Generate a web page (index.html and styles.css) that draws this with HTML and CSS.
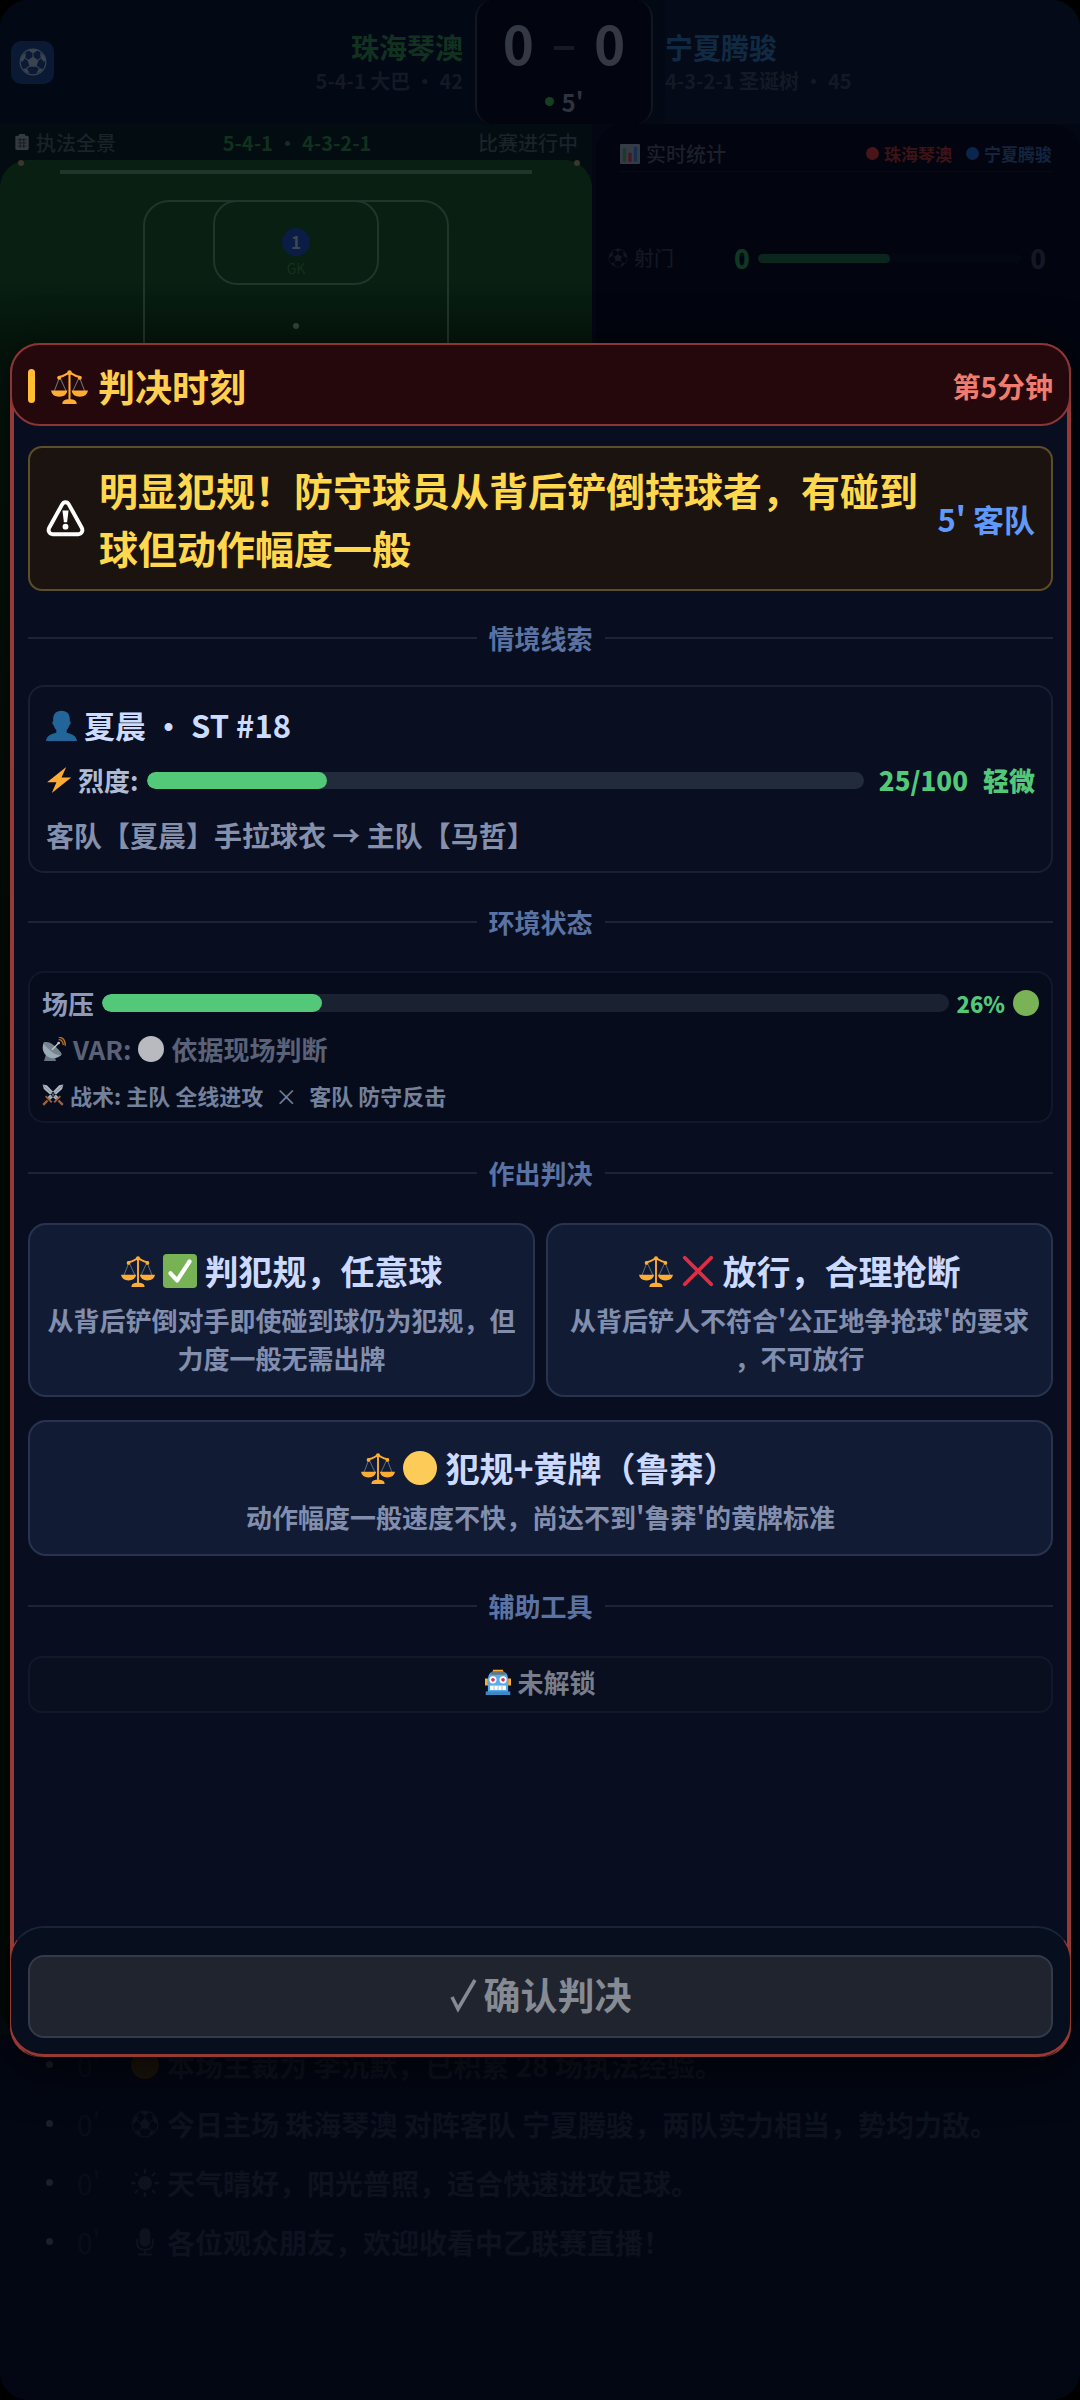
FILE: index.html
```html
<!DOCTYPE html>
<html lang="zh-CN">
<head>
<meta charset="utf-8">
<meta name="viewport" content="width=device-width, initial-scale=1">
<title>判决时刻</title>
<link rel="stylesheet" href="styles.css">
</head>
<body>
<svg class="sprite" aria-hidden="true">
  <symbol id="scales" viewBox="0 0 36 36">
    <path d="M8 10 3 23M9 10l6 13M28 10l5 13M27 10l-6 13" stroke="#66757f" fill="none"/>
    <path d="M7 9q5-1 8-3 3-2 6 0 3 2 8 3" stroke="#ffac33" stroke-width="2" fill="none"/>
    <path d="M17 5h2v26h-2z" fill="#ffac33"/>
    <circle cx="18" cy="4.500" r="2.200" fill="#ffac33"/><circle cx="8" cy="9.500" r="2" fill="#ffac33"/><circle cx="28" cy="9.500" r="2" fill="#ffac33"/>
    <path d="M0 22h16q-1 6-8 6t-8-6zM20 22h16q-1 6-8 6t-8-6zM11 35q0-4 5-4.500h4q5 .5 5 4.500z" fill="#ffac33"/>
  </symbol>
  <symbol id="check" viewBox="0 0 36 36"><rect width="36" height="36" rx="4" fill="#77b255"/><path d="M8 20.500l7 7.500L28 8" fill="none" stroke="#fff" stroke-width="4.500" stroke-linecap="round" stroke-linejoin="round"/></symbol>
  <symbol id="cross" viewBox="0 0 36 36"><path d="M4 4l28 28M32 4 4 32" stroke="#dd2e44" stroke-width="4" stroke-linecap="round"/></symbol>
  <symbol id="disc" viewBox="0 0 36 36"><circle cx="18" cy="18" r="18" fill="currentColor"/></symbol>
  <symbol id="person" viewBox="0 0 36 36"><path d="M24 26.500v-3c1.500-1.600 2.600-3.700 3.200-6 .7-.3 1.400-1 1.400-2.400 0-1.200-.3-2-1-2.500C28.300 5 24.500 1 18 1S7.700 5 8.400 12.600c-.7.500-1 1.300-1 2.500 0 1.400.7 2.100 1.400 2.400.6 2.300 1.700 4.400 3.200 6v3C6 28 1 29.500 0 36h36c-1-6.500-6-8-12-9.500z" fill="#226699"/></symbol>
  <symbol id="bolt" viewBox="0 0 36 36"><path d="M28 0 1.500 21h13L8 36l27-21.500H21.500z" fill="#ffac33"/></symbol>
  <symbol id="dish" viewBox="0 0 36 36">
    <path d="M6 26h12l3 10H3z" fill="#66757f"/>
    <path d="M3 8c-5 9 0 20 9 23 7 2 13 0 17-4z" fill="#99aab5"/><path d="M3 8c4-2 12 1 18 7s10 10 8 12c-4 2-12-2-17-7S1 11 3 8z" fill="#75838d"/>
    <path d="M15 19l10-10" stroke="#c0c7cc" stroke-width="2"/><circle cx="25" cy="9" r="2" fill="#c0c7cc"/>
    <path d="M25 4q6 0 7 8M25 0q10 1 10 13" fill="none" stroke="#b87020" stroke-width="2"/>
  </symbol>
  <symbol id="swords" viewBox="0 0 36 36">
    <path d="M1 1l7 1 20 21-4 4L3 8zM35 1l-7 1L8 23l4 4L33 8z" fill="#aab5bd"/><path d="M2 2l24 23M34 2 10 25" stroke="#7a8994" stroke-width="1.500"/>
    <path d="M20 30l10-10M16 30 6 20" stroke="#a3603a" stroke-width="3"/><path d="M27 27l7 7M9 27l-7 7" stroke="#a3603a" stroke-width="4"/>
  </symbol>
  <symbol id="warning" viewBox="0 0 36 36"><path d="M18 3c1.600 0 2.500 1 3.200 2.200L33 26.500c1.500 3-.2 6-3.200 6H6.200c-3 0-4.700-3-3.200-6L14.800 5.200C15.500 4 16.400 3 18 3z" fill="none" stroke="#fff" stroke-width="3.600"/><path d="M15.200 10.500h5.600l-1.300 11h-3z" fill="#fff"/><circle cx="18" cy="25.500" r="2.700" fill="#fff"/></symbol>
  <symbol id="robot" viewBox="0 0 36 36">
    <path d="M11 1h14v5H11zM0 13h4v10H0zM32 13h4v10h-4z" fill="#ffac33"/><path d="M8 5h20q4 3 4 11v16H4V16Q4 8 8 5z" fill="#55acee"/><path d="M10 3h16l3 5H7z" fill="#66757f"/><path d="M1 31h34v5H1z" fill="#3b88c3"/>
    <circle cx="11" cy="15" r="5" fill="#fff"/><circle cx="25" cy="15" r="5" fill="#fff"/><circle cx="11" cy="15" r="2.500" fill="#dd2e44"/><circle cx="25" cy="15" r="2.500" fill="#dd2e44"/>
    <path d="M7 23h22v6H7z" fill="#fff"/><path d="M12.500 23v6M18 23v6M23.500 23v6" stroke="#99aab5"/>
  </symbol>
  <symbol id="tick" viewBox="0 0 28 36"><path d="M2 20l6 12L25 3" fill="none" stroke="currentColor" stroke-width="3.500"/></symbol>
  <symbol id="ball" viewBox="0 0 36 36"><circle cx="18" cy="18" r="16.500" fill="none" stroke="currentColor" stroke-width="1.500"/><path d="M18 11l7 5-2.700 8h-8.600L11 16zM12 3l6 4 6-4-6-1.500zM1.500 15 5 9l4-3-1 7-4 5zM34.500 15 31 9l-4-3 1 7 4 5zM5 27l5-1 4 7-5-2zM31 27l-5-1-4 7 5-2z" fill="currentColor"/><path d="M18 7v5M8 13l4 3M28 13l-4 3M10 26l4-3M26 26l-4-3" stroke="currentColor" stroke-width="1.500"/></symbol>
  <symbol id="chart" viewBox="0 0 36 36"><rect width="36" height="36" rx="2" fill="#353b49"/><path d="M5 8h6v24H5z" fill="#1c3a24"/><path d="M15 16h6v16h-6z" fill="#4a1620"/><path d="M25 5h6v27h-6z" fill="#16304c"/></symbol>
  <symbol id="clipboard" viewBox="0 0 36 36"><rect x="3" y="4" width="30" height="32" rx="3" fill="currentColor"/><path d="M11 0h14v7H11z" fill="currentColor"/><path d="M8 13h20M8 20h20M8 27h20M14 9v23M22 9v23" stroke="#0b1417" stroke-width="1.500"/></symbol>
  <symbol id="sun" viewBox="0 0 36 36"><circle cx="18" cy="18" r="9" fill="currentColor"/><path d="M18 0v6M18 30v6M0 18h6M30 18h6M5 5l4 4M27 27l4 4M31 5l-4 4M9 27l-4 4" stroke="currentColor" stroke-width="3"/></symbol>
  <symbol id="mic" viewBox="0 0 36 36"><rect x="11" y="0" width="14" height="24" rx="7" fill="currentColor"/><path d="M8 14v6q0 8 10 8t10-8v-6M18 28v5M9 34h18" fill="none" stroke="currentColor" stroke-width="2.500"/></symbol>
</svg>

<div class="page">
  <header class="match">
    <div class="match-side match-home">
      <span class="logo"><svg class="icon icon-28"><use href="#ball"/></svg></span>
      <div class="team">
        <div class="team-name">珠海琴澳</div>
        <div class="team-plan">5-4-1 大巴 • 42</div>
      </div>
    </div>
    <div class="score">
      <div class="score-line"><span>0</span><i></i><span>0</span></div>
      <div class="clock"><i></i>5'</div>
    </div>
    <div class="match-side match-away">
      <div class="team">
        <div class="team-name">宁夏腾骏</div>
        <div class="team-plan">4-3-2-1 圣诞树 • 45</div>
      </div>
    </div>
  </header>

  <div class="board">
    <section class="field">
      <div class="field-head">
        <span class="with-icon"><svg class="icon icon-16"><use href="#clipboard"/></svg>执法全景</span>
        <b>5-4-1 • 4-3-2-1</b>
        <span>比赛进行中</span>
      </div>
      <div class="grass">
        <i class="flag flag-left"></i><i class="flag flag-right"></i>
        <div class="goal-line"></div>
        <div class="penalty-box">
          <div class="goal-box"><span class="keeper">1</span><span class="role">GK</span></div>
          <i class="spot"></i>
        </div>
      </div>
    </section>
    <section class="stats">
      <div class="stats-head">
        <span class="with-icon"><svg class="icon icon-20"><use href="#chart"/></svg>实时统计</span>
        <span class="legend"><span class="legend-home"><i></i>珠海琴澳</span><span class="legend-away"><i></i>宁夏腾骏</span></span>
      </div>
      <div class="stat-row">
        <span class="stat-name with-icon"><svg class="icon icon-20"><use href="#ball"/></svg>射门</span>
        <b class="stat-home">0</b>
        <span class="stat-bar"><i style="width:50%"></i></span>
        <b class="stat-away">0</b>
      </div>
    </section>
  </div>

  <ul class="log">
    <li><span>0'</span><svg class="icon icon-28 amber"><use href="#disc"/></svg>本场主裁为 李沉默，已积累 28 场执法经验。</li>
    <li><span>0'</span><svg class="icon icon-28"><use href="#ball"/></svg>今日主场 珠海琴澳 对阵客队 宁夏腾骏，两队实力相当，势均力敌。</li>
    <li><span>0'</span><svg class="icon icon-28"><use href="#sun"/></svg>天气晴好，阳光普照，适合快速进攻足球。</li>
    <li><span>0'</span><svg class="icon icon-28"><use href="#mic"/></svg>各位观众朋友，欢迎收看中乙联赛直播！</li>
  </ul>
</div>

<div class="overlay">
  <main class="modal" role="dialog" aria-labelledby="modal-title">
    <header class="modal-head">
      <h1 id="modal-title"><svg class="icon icon-37"><use href="#scales"/></svg>判决时刻</h1>
      <span class="minute">第5分钟</span>
    </header>

    <div class="modal-body">
      <div class="alert">
        <svg class="icon icon-39"><use href="#warning"/></svg>
        <p>明显犯规！防守球员从背后铲倒持球者，有碰到球但动作幅度一般</p>
        <span class="alert-side">5' 客队</span>
      </div>

      <h2 class="divider">情境线索</h2>
      <section class="card clue">
        <div class="player"><svg class="icon icon-31"><use href="#person"/></svg>夏晨 • ST #18</div>
        <div class="meter-row">
          <span class="with-icon"><svg class="icon icon-26"><use href="#bolt"/></svg>烈度:</span>
          <span class="meter"><i style="width:25%"></i></span>
          <b class="value">25/100</b><b class="value">轻微</b>
        </div>
        <div class="action">客队【夏晨】手拉球衣 → 主队【马哲】</div>
      </section>

      <h2 class="divider divider-mid">环境状态</h2>
      <section class="card env">
        <div class="meter-row">
          <span>场压</span>
          <span class="meter"><i style="width:26%"></i></span>
          <b class="percent">26%</b>
          <svg class="icon icon-26 green"><use href="#disc"/></svg>
        </div>
        <div class="var"><svg class="icon icon-24"><use href="#dish"/></svg>VAR:<svg class="icon icon-26 white"><use href="#disc"/></svg>依据现场判断</div>
        <div class="tactics"><svg class="icon icon-22"><use href="#swords"/></svg>战术: 主队 全线进攻<span class="versus">×</span>客队 防守反击</div>
      </section>

      <h2 class="divider divider-wide">作出判决</h2>
      <div class="choices">
        <button type="button" class="choice">
          <span class="choice-title"><svg class="icon icon-34"><use href="#scales"/></svg><svg class="icon icon-34"><use href="#check"/></svg>判犯规，任意球</span>
          <span class="choice-note">从背后铲倒对手即使碰到球仍为犯规，但力度一般无需出牌</span>
        </button>
        <button type="button" class="choice">
          <span class="choice-title"><svg class="icon icon-34"><use href="#scales"/></svg><svg class="icon icon-34"><use href="#cross"/></svg>放行，合理抢断</span>
          <span class="choice-note">从背后铲人不符合'公正地争抢球'的要求，不可放行</span>
        </button>
        <button type="button" class="choice choice-full">
          <span class="choice-title"><svg class="icon icon-34"><use href="#scales"/></svg><svg class="icon icon-34 yellow"><use href="#disc"/></svg><span class="hanging-bracket">犯规+黄牌（鲁莽）</span></span>
          <span class="choice-note">动作幅度一般速度不快，尚达不到'鲁莽'的黄牌标准</span>
        </button>
      </div>

      <h2 class="divider divider-wide">辅助工具</h2>
      <button type="button" class="tool" disabled><svg class="icon icon-26"><use href="#robot"/></svg>未解锁</button>
    </div>

    <footer class="modal-foot">
      <button type="button" class="confirm" disabled><svg class="icon icon-tick"><use href="#tick"/></svg>确认判决</button>
    </footer>
  </main>
</div>
</body>
</html>
```
FILE: styles.css
```css
* { box-sizing: border-box; }

body {
  margin: 0;
  background: #000;
  color: #858fab;
  font-family: "Noto Sans CJK SC", "Noto Sans", sans-serif;
  font-weight: 700;
}

h1, h2, p, ul { margin: 0; padding: 0; }
button { font: inherit; color: inherit; }

.sprite { position: absolute; width: 0; height: 0; }
.icon { flex: none; width: 26px; height: 26px; }
.icon-16 { width: 16px; height: 18px; }
.icon-20 { width: 20px; height: 20px; }
.icon-22 { width: 22px; height: 22px; }
.icon-24 { width: 24px; height: 24px; }
.icon-28 { width: 28px; height: 28px; }
.icon-31 { width: 31px; height: 31px; }
.icon-34 { width: 34px; height: 34px; }
.icon-37 { width: 37px; height: 37px; }
.icon-39 { width: 39px; height: 39px; }
.icon-tick { width: 28px; height: 36px; }
.with-icon { display: flex; align-items: center; gap: 6px; }
.green { color: #7ab356; }
.white { color: #b9bac0; }
.yellow { color: #fdcb58; }

/* Match page behind the dialog */
.page {
  display: flex;
  flex-direction: column;
  min-height: 100vh;
  border-radius: 28px;
  overflow: hidden;
  background: #030714;
}

.match {
  display: grid;
  grid-template-columns: 463fr 178px 415fr;
  gap: 12px;
  height: 124px;
  background: #030815;
}
.match-side { display: flex; align-items: center; }
.match-home { justify-content: space-between; padding-left: 11px; text-align: right; }
.match-away { background: #040a17; }
.team-name { font-size: 28px; line-height: 38px; color: #113220; }
.match-away .team-name { color: #112a44; }
.team-plan { font-size: 20px; line-height: 30px; color: #141925; }
.logo {
  display: grid;
  place-items: center;
  width: 43px;
  height: 43px;
  border-radius: 10px;
  background: #0a1a35;
  color: #3c4350;
}
.score {
  border: 2px solid #12161e;
  border-width: 0 2px;
  border-radius: 18px;
  background: #02040f;
  text-align: center;
}
.score-line {
  display: flex;
  justify-content: center;
  align-items: center;
  gap: 20px;
  height: 84px;
  color: #343844;
  font-size: 53px;
}
.score-line i { width: 20px; height: 4px; margin-top: 12px; background: #161a25; }
.clock {
  display: flex;
  justify-content: center;
  align-items: center;
  gap: 8px;
  height: 34px;
  color: #2e333f;
  font-size: 24px;
}
.clock i { width: 9px; height: 9px; border-radius: 50%; background: #14401f; }

.board {
  display: grid;
  grid-template-columns: 592fr 484fr;
  gap: 4px;
  flex: 1;
}
.field { display: flex; flex-direction: column; background: #030c10; }
.field-head {
  display: flex;
  justify-content: space-between;
  align-items: center;
  height: 36px;
  padding: 0 14px;
  font-size: 20px;
  font-weight: 500;
  color: #1a222a;
}
.field-head svg { color: #353a40; }
.field-head b { color: #10311d; }
.grass {
  position: relative;
  flex: 1;
  padding: 10px 60px;
  border-radius: 28px;
  background: linear-gradient(#081f12 0, #081f12 120px, #05150c 190px, #020a08 900px);
}
.flag {
  position: absolute;
  top: 0;
  width: 6px;
  height: 6px;
  border-radius: 50%;
  background: #39382a;
}
.flag-left { left: 18px; }
.flag-right { right: 12px; }
.goal-line { height: 4px; background: #22352b; }
.penalty-box {
  display: flex;
  flex-direction: column;
  align-items: center;
  width: 65%;
  height: 270px;
  margin: 26px auto 0;
  border: 2px solid #22352b;
  border-radius: 26px;
}
.goal-box {
  display: flex;
  flex-direction: column;
  align-items: center;
  gap: 2px;
  width: 55%;
  height: 85px;
  margin-top: -2px;
  padding-top: 26px;
  border: 2px solid #22352b;
  border-radius: 24px;
}
.keeper {
  width: 28px;
  border-radius: 50%;
  background: #0b1d45;
  color: #3e4658;
  font-size: 17px;
  line-height: 28px;
  text-align: center;
}
.role { color: #17301f; font-size: 14px; line-height: 20px; font-weight: 400; }
.spot { width: 6px; height: 6px; margin-top: 38px; border-radius: 50%; background: #34463b; }

.stats { padding: 12px 28px 12px 24px; border-radius: 28px; background: #02040f; }
.stats-head {
  display: flex;
  justify-content: space-between;
  align-items: center;
  height: 36px;
  border-bottom: 1px solid #070b17;
  color: #1b202c;
  font-size: 20px;
  font-weight: 500;
}
.legend { display: flex; gap: 14px; font-size: 17px; font-weight: 700; }
.legend span { display: flex; align-items: center; gap: 5px; }
.legend i { width: 13px; height: 13px; border-radius: 50%; }
.legend-home { color: #3c1417; }
.legend-home i { background: #4a1517; }
.legend-away { color: #13243f; }
.legend-away i { background: #0b264d; }
.stat-row { display: flex; align-items: center; gap: 8px; margin: 66px 6px 0 -12px; line-height: 40px; font-size: 26px; }
.stat-name { width: 118px; color: #121722; font-size: 20px; font-weight: 500; }
.stat-home { color: #0e3823; }
.stat-away { color: #141824; }
.stat-bar { flex: 1; height: 9px; border-radius: 5px; background: #030712; }
.stat-bar i { display: block; height: 9px; border-radius: 5px; background: #0b271d; }

.log { padding: 0 28px 129px 50px; list-style: none; color: #0d121e; font-size: 28px; }
.log li { display: flex; align-items: center; gap: 8px; height: 59px; }
.log li::before { content: ""; width: 7px; height: 7px; margin-left: -4px; border-radius: 50%; background: #1b1f2a; }
.log span { width: 62px; padding-left: 16px; color: #080d19; font-weight: 400; }
.amber { color: #1c140c; }

/* Decision dialog */
.overlay {
  position: absolute;
  inset: 0;
  display: flex;
  align-items: center;
  padding: 0 9px 0 10px;
}
.modal {
  width: 100%;
  border: solid #963a38;
  border-width: 0 4px;
  border-radius: 30px;
  background: #080e1f;
  box-shadow: 0 10px 50px rgba(0, 0, 0, .7);
}
.modal-head {
  display: flex;
  justify-content: space-between;
  align-items: center;
  height: 83px;
  margin: 0 -4px;
  padding: 3px 16px 0;
  border: 2px solid #8a3536;
  border-radius: 30px;
  background: #24080b;
}
.modal-head h1 {
  display: flex;
  align-items: center;
  gap: 10px;
  color: #ffcf4f;
  font-size: 37px;
  line-height: 56px;
}
.modal-head h1::before {
  content: "";
  width: 7px;
  height: 34px;
  margin-right: 6px;
  border-radius: 4px;
  background: #ffbe32;
}
.minute { color: #f07c70; font-size: 28px; }

.modal-body { padding: 20px 14px 213px; }

.alert {
  display: flex;
  align-items: center;
  gap: 14px;
  padding: 12px 16px 13px;
  border: 2px solid #5c4e28;
  border-radius: 14px;
  background: #1b130f;
}
.alert p { flex: 1; color: #ffd84e; font-size: 39px; line-height: 58px; }
.alert-side { margin-left: -6px; color: #6199fa; font-size: 31px; white-space: nowrap; }

.divider {
  display: flex;
  align-items: center;
  gap: 12px;
  padding: 28px 0;
  color: #5b73a3;
  font-size: 26px;
  line-height: 38px;
}
.divider::before, .divider::after { content: ""; flex: 1; height: 2px; background: #1c2538; }
.divider-mid { padding: 30px 0; }
.divider-wide { padding: 31px 0; }

.card { display: flex; flex-direction: column; border: 2px solid #182036; border-radius: 16px; }
.clue { gap: 5px; padding: 13px 16px 11px; background: #090e20; }
.player { display: flex; align-items: center; gap: 7px; color: #ccdcff; font-size: 31px; line-height: 50px; }
.meter-row { display: flex; align-items: center; gap: 9px; color: #b1bbd2; font-size: 26px; line-height: 50px; }
.meter { flex: 1; height: 17px; border-radius: 9px; background: #222b3b; overflow: hidden; }
.meter i { display: block; height: 100%; border-radius: 9px; background: #52c878; }
.value { margin-left: 6px; color: #52c878; }
.action { color: #8591ac; font-size: 28px; line-height: 50px; }

.env { padding: 7px 12px 3px; border-color: #11182b; background: #070c1d; }
.env .meter { height: 18px; background: #1a2232; }
.env .meter-row { gap: 8px; color: #8d9ab8; line-height: 46px; }
.percent { color: #52c878; font-size: 22px; }
.var { display: flex; align-items: center; gap: 7px; color: #5a6278; font-size: 26px; line-height: 46px; }
.tactics { display: flex; align-items: center; gap: 6px; color: #73819b; font-size: 22px; line-height: 46px; }
.versus { padding: 0 6px; font-weight: 400; }

.choices { display: grid; grid-template-columns: 1fr 1fr; gap: 23px 11px; }
.choice {
  padding: 22px 16px 18px;
  border: 2px solid #28334f;
  border-radius: 18px;
  background: #121b34;
  text-align: center;
}
.choice-full { grid-column: 1 / -1; }
.choice-title {
  display: flex;
  justify-content: center;
  align-items: center;
  gap: 8px;
  margin-bottom: 6px;
  color: #ccdaff;
  font-size: 34px;
  line-height: 48px;
}
/* The blank half of a closing full-width bracket does not count for centring */
.hanging-bracket { margin-right: -18px; }
.choice-note { display: block; color: #828ead; font-size: 26px; line-height: 38px; line-break: anywhere; }

.tool {
  display: flex;
  justify-content: center;
  align-items: center;
  gap: 6px;
  width: 100%;
  padding: 0 0 6px;
  border: 2px solid #11182b;
  border-radius: 14px;
  background: #0a0f20;
  color: #777d8b;
  font-size: 26px;
  line-height: 47px;
}

.modal-foot {
  margin: 0 -4px;
  padding: 27px 17px 16px;
  border: solid #963a30;
  border-width: 2px 1px 3px;
  border-top-color: #192438;
  border-radius: 34px;
  background: #070e1e;
}
.confirm {
  display: flex;
  justify-content: center;
  align-items: center;
  gap: 6px;
  width: 100%;
  padding: 10px 12px 14px;
  border: 2px solid #343a4a;
  border-radius: 16px;
  background: #20242f;
  color: #858a93;
  font-size: 37px;
  line-height: 55px;
}
```
